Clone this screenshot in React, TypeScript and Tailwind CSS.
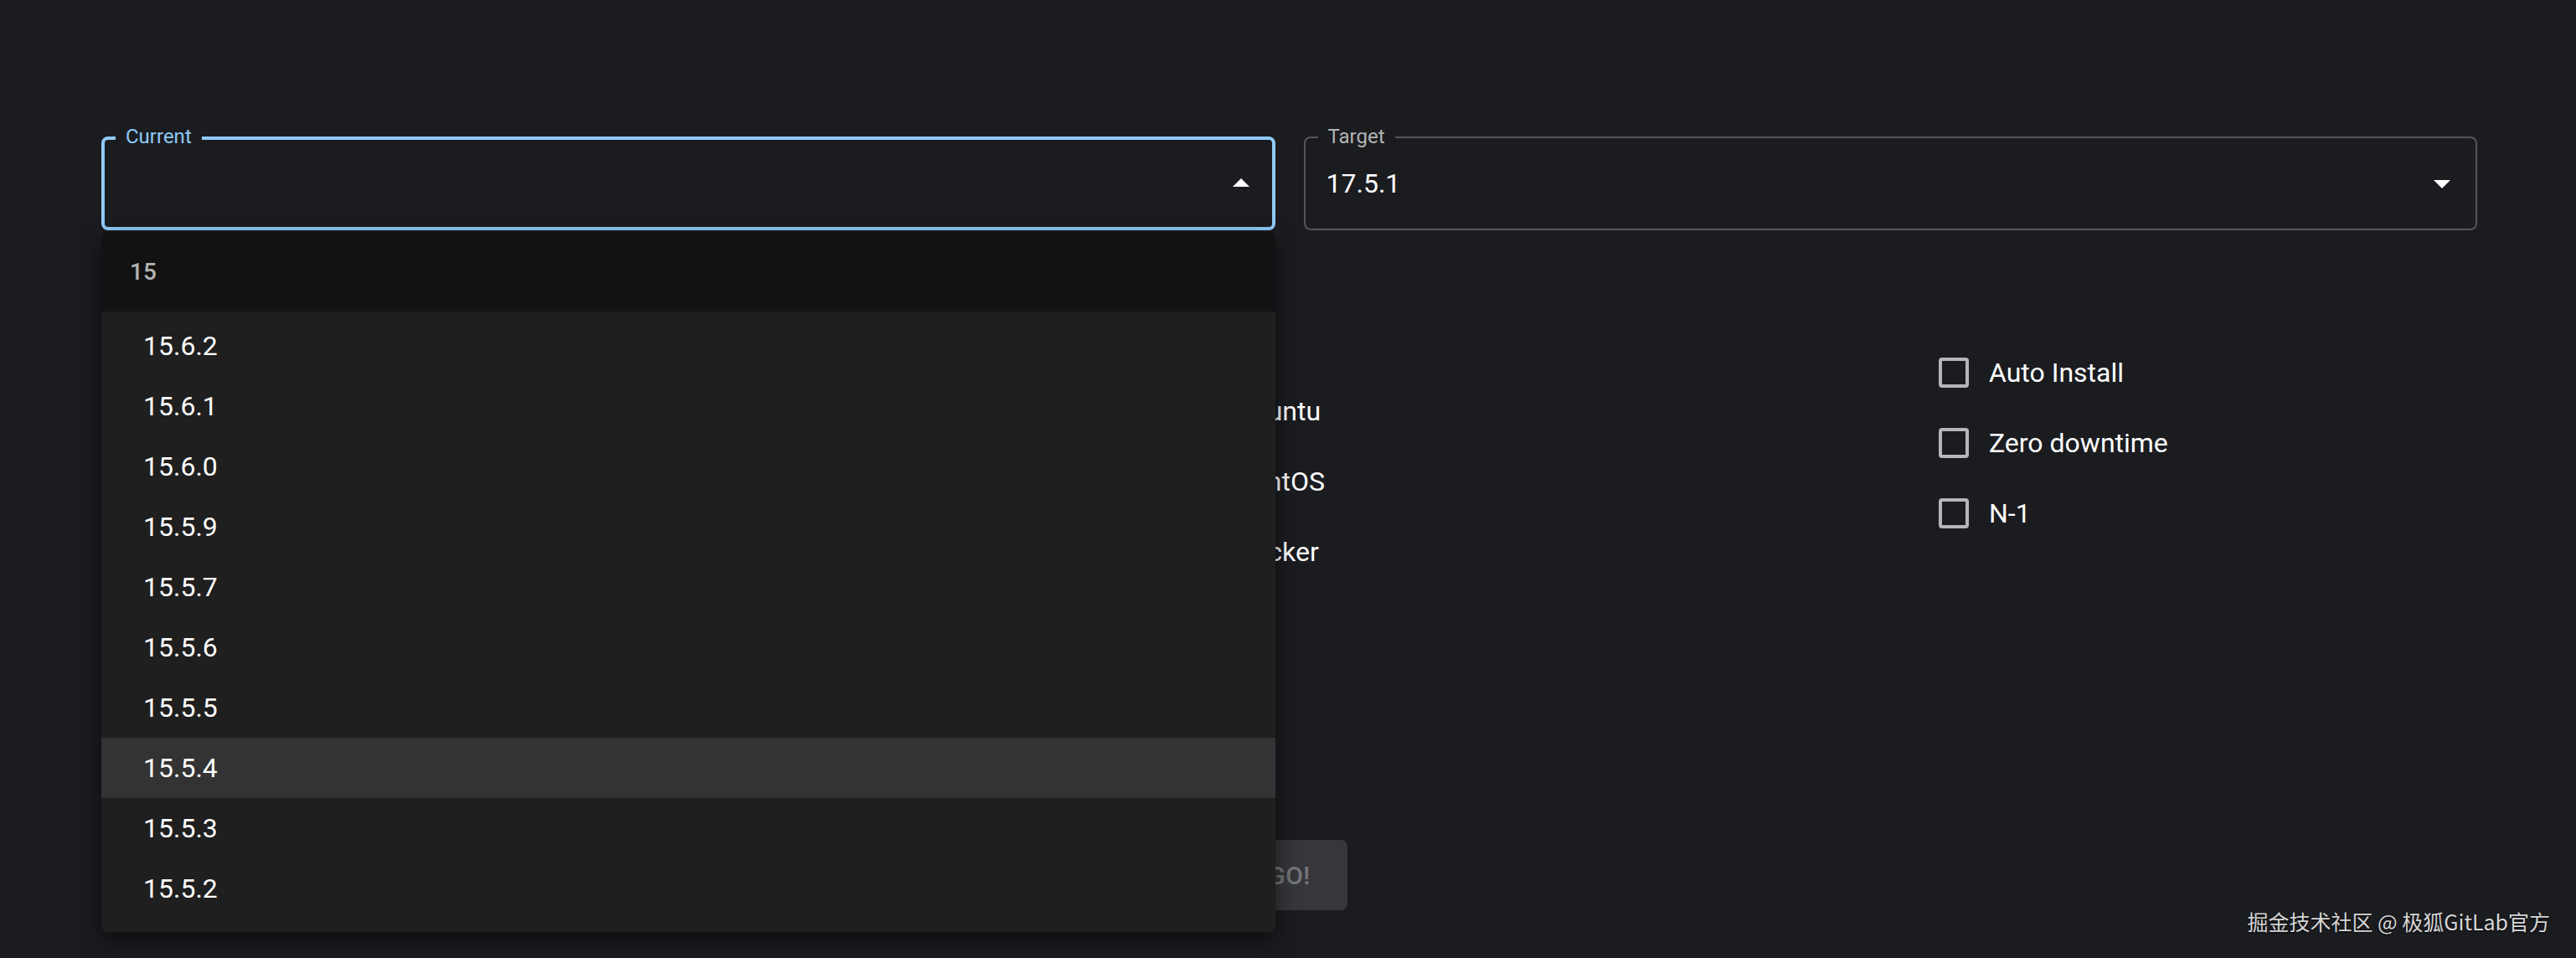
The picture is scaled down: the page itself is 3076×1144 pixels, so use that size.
import React from "react";

const versions = ["15.6.2", "15.6.1", "15.6.0", "15.5.9", "15.5.7", "15.5.6", "15.5.5", "15.5.4", "15.5.3", "15.5.2"];
const platforms = ["Ubuntu", "CentOS", "Docker"];
const options = ["Auto Install", "Zero downtime", "N-1"];

const ArrowDropDown = ({ up }: { up?: boolean }) => (
  <svg width="48" height="48" viewBox="0 0 24 24" className="fill-white shrink-0">
    <path d={up ? "M7 14l5-5 5 5z" : "M7 10l5 5 5-5z"} />
  </svg>
);

const App = () => {
  const [hovered, setHovered] = React.useState<string>("15.5.4");

  return (
    <div className="relative min-h-screen h-[1144px] bg-[#1b1c20] font-['Roboto','Liberation_Sans',sans-serif] text-white overflow-hidden">
      <div className="pt-[163px] pl-[121px] pr-[118px]">
        {/* version pickers */}
        <div className="grid grid-cols-2 gap-[34px]">
          <div className="relative">
            <div className="relative h-[112px] rounded-[8px] border-4 border-[#90caf9] flex items-center justify-between pl-[24px] pr-[13px]">
              <span className="absolute top-[-16px] left-[13px] px-[12px] bg-[#1b1c20] text-[24px] leading-[24px] text-[#90caf9]">
                Current
              </span>
              <span className="text-[32px]"></span>
              <ArrowDropDown up />
            </div>

            {/* open menu */}
            <div className="absolute z-10 top-[calc(100%+2px)] left-0 w-full rounded-[8px] overflow-hidden bg-[#1f1f1f] shadow-[0_10px_28px_rgba(0,0,0,0.55)] pb-[16px]">
              <div className="h-[95px] flex items-center pl-[34px] bg-[#121212] text-[28px] font-medium text-[#b3b3b3]">15</div>
              <div className="pt-[5px]">
                {versions.map(v => (
                  <div
                    key={v}
                    onMouseEnter={() => setHovered(v)}
                    className={`h-[72px] flex items-center pl-[50px] text-[32px] ${hovered === v ? "bg-[#333333]" : ""}`}
                  >
                    {v}
                  </div>
                ))}
              </div>
            </div>
          </div>

          <div className="relative h-[112px] rounded-[8px] border-2 border-[#55565a] flex items-center justify-between pl-[25px] pr-[16px]">
            <span className="absolute top-[-14px] left-[15px] px-[12px] bg-[#1b1c20] text-[24px] leading-[24px] text-[#b3b4b6]">
              Target
            </span>
            <span className="text-[32px]">17.5.1</span>
            <ArrowDropDown />
          </div>
        </div>

        {/* settings */}
        <div className="flex mt-[128px]">
          <div className="w-[1270px]"></div>
          <div className="w-[900px] flex flex-col">
            <div className="h-[46px] text-[32px] leading-[46px] text-[#b3b4b6]">OS</div>
            {platforms.map(p => (
              <label key={p} className="h-[84px] flex items-center text-[32px]">
                <span className="w-[84px] h-[84px] flex items-center justify-center">
                  <span className="w-[40px] h-[40px] rounded-full border-4 border-[#b3b4b6]"></span>
                </span>
                {p}
              </label>
            ))}
          </div>
          <div className="flex-1 flex flex-col">
            {options.map(o => (
              <label key={o} className="h-[84px] flex items-center text-[32px]">
                <span className="w-[84px] h-[84px] flex items-center justify-center">
                  <span className="w-[36px] h-[36px] rounded-[4px] border-4 border-[#b5b6b8]"></span>
                </span>
                {o}
              </label>
            ))}
          </div>
        </div>

        <div className="flex justify-center mt-[302px]">
          <button
            disabled
            className="h-[84px] px-[44px] rounded-[8px] bg-[#36373a] text-[30px] font-medium text-[#75767a] tracking-[0.5px]"
          >
            GO!
          </button>
        </div>
      </div>

      {/* watermark */}
      <div className="absolute right-[31px] bottom-[31px] text-[25px] leading-[25px] text-[#d6d6d6] font-['Noto_Sans_CJK_SC','Noto_Sans',sans-serif] [text-shadow:0_1px_2px_rgba(0,0,0,0.9)]">
        掘金技术社区 @ 极狐GitLab官方
      </div>
    </div>
  );
};

export default App;
